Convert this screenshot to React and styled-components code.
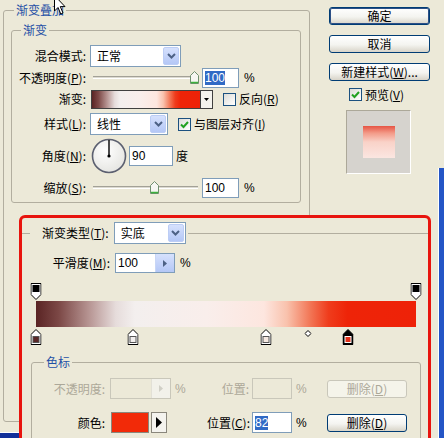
import React from 'react';
import styled, { createGlobalStyle } from 'styled-components';

const GRADIENT =
    'linear-gradient(to right, #5a2424 0%, #7c4846 6%, #b79593 14%, #e6dcdb 21%, #f3efee 26%, #f9eeeb 45%, #fde6df 60%, #f9c2ad 66%, #f27858 72%, #ef3c1c 77%, #ee2408 82%, #ee2208 100%)';

const bottomStops = [
    { pos: 0, color: '#5a2828' },
    { pos: 25.5, color: '#f2efee' },
    { pos: 60.5, color: '#f6e9e1' },
    { pos: 82, color: '#e3301a', selected: true },
];
const topStops = [{ pos: 0 }, { pos: 100 }];
const midpoint = 71.5;

const GlobalStyle = createGlobalStyle`
    html, body {
        margin: 0;
        padding: 0;
        background: #ece9d8;
    }
    body {
        font-family: "Noto Sans CJK SC", "Liberation Sans", sans-serif;
        font-size: 12px;
        color: #000;
    }
    u { text-underline-offset: 1px; }
`;

const Screen = styled.div`
    position: relative;
    width: 444px;
    height: 438px;
    overflow: hidden;
    background: #ece9d8;
`;

const Dialog = styled.div`
    display: flex;
    align-items: flex-start;
`;

const Group = styled.fieldset`
    box-sizing: border-box;
    min-width: 0;
    margin: ${(p) => p.$m || 0};
    padding: ${(p) => p.$pad || 0};
    width: ${(p) => (p.$w ? p.$w + 'px' : 'auto')};
    height: ${(p) => (p.$h ? p.$h + 'px' : 'auto')};
    border: 1px solid #b2ae9f;
    border-radius: 3px;
`;

const TopLineGroup = styled.fieldset`
    box-sizing: border-box;
    min-width: 0;
    margin: 4px 0 0 0;
    padding: 9px 0 0 0;
    border: none;
    border-top: 1px solid #b2ae9f;
`;

const Legend = styled.legend`
    margin-left: ${(p) => p.$ml}px;
    padding: 0 2px;
    color: #1f50a6;
    line-height: 14px;
`;

const TypeLegend = styled.legend`
    margin-left: 8px;
    padding: 0 2px 0 12px;
`;

const LegendInner = styled.div`
    display: flex;
    align-items: center;
    gap: 5px;
    line-height: 14px;
`;

const Form = styled.div`
    display: flex;
    flex-direction: column;
    padding-top: 8px;
`;

const Row = styled.div`
    display: flex;
    align-items: center;
    height: ${(p) => p.$h}px;
`;

const Label = styled.div`
    flex-shrink: 0;
    width: ${(p) => p.$w}px;
    margin-right: ${(p) => p.$gap ?? 4}px;
    text-align: right;
    white-space: nowrap;
    line-height: 14px;
    color: ${(p) => (p.$disabled ? '#aca899' : '#000')};
`;

const Text = styled.span`
    margin-left: ${(p) => p.$ml || 0}px;
    line-height: 14px;
    white-space: nowrap;
    font-family: ${(p) => (p.$latin ? '"Liberation Sans", "Noto Sans CJK SC", sans-serif' : 'inherit')};
    color: ${(p) => (p.$disabled ? '#aca899' : '#000')};
`;

const Combo = styled.div`
    box-sizing: border-box;
    width: ${(p) => p.$w}px;
    height: 22px;
    border: 1px solid #7f9db9;
    background: #fff;
    display: flex;
    align-items: center;
    justify-content: space-between;
    padding: 0 1px 0 6px;
`;

const ComboButton = styled.span`
    box-sizing: border-box;
    width: 16px;
    height: 18px;
    border: 1px solid #bccdf5;
    border-radius: 2px;
    background: linear-gradient(#d6e1fd, #b4c7f6);
    display: flex;
    align-items: center;
    justify-content: center;
`;

const Field = styled.div`
    box-sizing: border-box;
    flex-shrink: 0;
    width: ${(p) => p.$w}px;
    height: ${(p) => p.$h || 20}px;
    margin-left: ${(p) => p.$ml || 0}px;
    border: 1px solid ${(p) => (p.$disabled ? '#c9c7ba' : '#7f9db9')};
    background: ${(p) => (p.$disabled ? '#ece9d8' : '#fff')};
    display: flex;
    align-items: center;
    justify-content: space-between;
    padding-left: 2px;
    font-family: "Liberation Sans", "Noto Sans CJK SC", sans-serif;
    font-size: 12px;
    line-height: 14px;
`;

const Selected = styled.span`
    background: #316ac5;
    color: #fff;
`;

const SpinButton = styled.span`
    box-sizing: border-box;
    width: 19px;
    height: 100%;
    display: flex;
    align-items: center;
    justify-content: center;
    background: ${(p) => (p.$disabled ? '#f2f1ea' : 'linear-gradient(#d6e1fd, #b4c7f6)')};
    border-left: 1px solid ${(p) => (p.$disabled ? '#e2e0d6' : '#c8d6f6')};
`;

const Slider = styled.div`
    position: relative;
    flex-shrink: 0;
    width: ${(p) => p.$w}px;
    height: 16px;
`;

const Track = styled.div`
    margin: 6px 2px 0 3px;
    height: 1px;
    border-top: 1px solid #a3a197;
    border-bottom: 1px solid #fff;
    background: #dcdad0;
`;

const Thumb = styled.svg`
    position: absolute;
    top: 1px;
`;

const Swatch = styled.div`
    box-sizing: border-box;
    width: 110px;
    height: 19px;
    margin-left: 1px;
    border: 1px solid #404040;
    background: ${GRADIENT};
`;

const SwatchArrow = styled.div`
    box-sizing: border-box;
    width: 12px;
    height: 19px;
    border: 1px solid #404040;
    border-left: none;
    background: #f4f3ee;
    display: flex;
    align-items: center;
    justify-content: center;
`;

const CheckBox = styled.span`
    box-sizing: border-box;
    flex-shrink: 0;
    width: 13px;
    height: 13px;
    margin-left: ${(p) => p.$ml || 0}px;
    margin-right: 3px;
    border: 1px solid #1c5180;
    background: linear-gradient(135deg, #dcdcd7, #ffffff);
    display: inline-flex;
    align-items: center;
    justify-content: center;
`;

const Dial = styled.svg`
    flex-shrink: 0;
    margin-left: 1px;
`;

const Side = styled.div`
    display: flex;
    flex-direction: column;
    width: 101px;
    margin: 7px 0 0 19px;
`;

const Button = styled.div`
    box-sizing: border-box;
    flex-shrink: 0;
    width: ${(p) => p.$w || 101}px;
    height: 18px;
    margin-top: ${(p) => p.$mt || 0}px;
    border: 1px solid ${(p) => (p.$disabled ? '#c9c7ba' : '#003c74')};
    border-radius: 3px;
    background: ${(p) =>
        p.$disabled ? '#f5f4ea' : 'linear-gradient(#ffffff, #f4f4f0 55%, #d8d4c8)'};
    box-shadow: ${(p) => (p.$default ? 'inset 0 0 0 1px #2c4f86' : 'none')};
    color: ${(p) => (p.$disabled ? '#aca899' : '#000')};
    display: flex;
    align-items: center;
    justify-content: center;
    line-height: 14px;
    white-space: nowrap;
`;

const CheckRow = styled.div`
    display: flex;
    align-items: center;
    margin: 7px 0 0 20px;
    height: 13px;
    line-height: 14px;
`;

const Preview = styled.div`
    box-sizing: border-box;
    width: 65px;
    height: 64px;
    margin: 9px 0 0 17px;
    border: 1px solid #fff;
    border-top-color: #aca899;
    border-left-color: #aca899;
    background: #d6d3ce;
    display: flex;
    align-items: center;
    justify-content: center;
`;

const PreviewSwatch = styled.div`
    width: 32px;
    height: 32px;
    background: linear-gradient(#e65444 0%, #f39a88 22%, #f9d2c8 50%, #fbe6e1 100%);
`;

const Overlay = styled.div`
    position: absolute;
    left: 19px;
    top: 215px;
    width: 412px;
    height: 240px;
    box-sizing: border-box;
    border: 3px solid #e8140e;
    border-radius: 6px;
    background: #ece9d8;
`;

const StopTrack = styled.div`
    position: relative;
    width: 380px;
    height: 45px;
    margin: 10px 0 0 14px;
    padding-top: 18px;
`;

const Bar = styled.div`
    height: 26px;
    background: ${GRADIENT};
`;

const StopIcon = styled.svg`
    position: absolute;
    top: ${(p) => p.$top}px;
    transform: translateX(-50%);
`;

const StopGrid = styled.div`
    display: grid;
    grid-template-columns: 78px 61px 18px 63px 40px 35px 80px;
    grid-template-rows: 21px 21px;
    row-gap: 13px;
    column-gap: 0;
    align-items: center;
    padding-top: 9px;
`;

const GridLabel = styled.div`
    text-align: right;
    white-space: nowrap;
    line-height: 14px;
    padding-right: ${(p) => p.$pr || 0}px;
    color: ${(p) => (p.$disabled ? '#aca899' : '#000')};
`;

const GridCell = styled.div`
    display: flex;
    align-items: center;
    padding-left: ${(p) => p.$pl || 0}px;
`;

const ColorChip = styled.div`
    box-sizing: border-box;
    width: 38px;
    height: 21px;
    margin-left: 1px;
    border: 1px solid #8a877c;
    background: #f22a08;
`;

const ChipArrow = styled.div`
    box-sizing: border-box;
    width: 16px;
    height: 21px;
    margin-left: 2px;
    border: 1px solid #8a877c;
    background: #f4f3ee;
    display: flex;
    align-items: center;
    justify-content: center;
`;

const Cursor = styled.svg`
    position: absolute;
    left: 54px;
    top: -5px;
`;

const EdgeRight = styled.div`
    position: absolute;
    left: 438px;
    top: 168px;
    width: 6px;
    bottom: 0;
    background: #2455c6;
    border-left: 1px solid #fff;
`;

const EdgeBottom = styled.div`
    position: absolute;
    left: 0;
    top: 432px;
    width: 19px;
    height: 6px;
    background: #12309a;
    border-top: 1px solid #fff;
`;

function Chevron() {
    return (
        <svg width="9" height="6" viewBox="0 0 9 6">
            <polyline points="1,1 4.5,4.5 8,1" fill="none" stroke="#4d6185" strokeWidth="2" />
        </svg>
    );
}

function Check() {
    return (
        <svg width="11" height="11" viewBox="0 0 11 11">
            <path d="M2 5.5 L4.5 8 L9 3" fill="none" stroke="#21a121" strokeWidth="2" />
        </svg>
    );
}

function SliderThumb({ left }) {
    return (
        <Thumb width="9" height="13" viewBox="0 0 9 13" style={{ left }}>
            <path d="M0.5 4.5 L4.5 0.5 L8.5 4.5 V12.5 H0.5 Z" fill="#f6f6f2" stroke="#6f8f6f" />
            <line x1="1" y1="11.5" x2="8" y2="11.5" stroke="#3cb03c" strokeWidth="1.5" />
        </Thumb>
    );
}

function AngleDial() {
    return (
        <Dial width="36" height="36" viewBox="0 0 36 36">
            <defs>
                <radialGradient id="dialFill" cx="40%" cy="35%" r="70%">
                    <stop offset="0%" stopColor="#ffffff" />
                    <stop offset="100%" stopColor="#e4e4e0" />
                </radialGradient>
            </defs>
            <circle cx="18" cy="18" r="16.5" fill="url(#dialFill)" stroke="#5c6070" strokeWidth="1.6" />
            <line x1="18" y1="18" x2="18" y2="2" stroke="#000" strokeWidth="1.4" />
            <circle cx="18" cy="18" r="1.6" fill="#000" />
        </Dial>
    );
}

function ColorStop({ stop }) {
    return (
        <StopIcon $top={46} width="11" height="16" viewBox="0 0 11 16" style={{ left: `${stop.pos}%` }}>
            <path
                d="M5.5 0.5 L10.5 5.5 V15.5 H0.5 V5.5 Z"
                fill={stop.selected ? '#000' : '#fff'}
                stroke="#000"
            />
            <rect x="2.5" y="7.5" width="6" height="6" fill={stop.color} stroke={stop.selected ? '#fff' : '#555'} />
        </StopIcon>
    );
}

function OpacityStop({ stop }) {
    return (
        <StopIcon $top={0} width="11" height="17" viewBox="0 0 11 17" style={{ left: `${stop.pos}%` }}>
            <path d="M0.5 0.5 H10.5 V11.5 L5.5 16.5 L0.5 11.5 Z" fill="#fff" stroke="#000" />
            <rect x="2" y="2" width="7" height="7" fill="#000" />
        </StopIcon>
    );
}

function App() {
    return (
        <Screen>
            <GlobalStyle />
            <Dialog>
                <Group $m="3px 0 0 3px" $w={307} $h={419}>
                    <Legend $ml={10}>渐变叠加</Legend>
                    <Group $m="6px 0 0 7px" $w={290}>
                        <Legend $ml={9}>渐变</Legend>
                        <Form>
                            <Row $h={22}>
                                <Label $w={74}>混合模式:</Label>
                                <Combo $w={91}>
                                    <Text>正常</Text>
                                    <ComboButton><Chevron /></ComboButton>
                                </Combo>
                            </Row>
                            <Row $h={21}>
                                <Label $w={74}>不透明度(<u>P</u>):</Label>
                                <Slider $w={110}>
                                    <Track />
                                    <SliderThumb left={100} />
                                </Slider>
                                <Field $w={37} $ml={2}>
                                    <Selected>100</Selected>
                                </Field>
                                <Text $ml={5} $latin>%</Text>
                            </Row>
                            <Row $h={22}>
                                <Label $w={74}>渐变:</Label>
                                <Swatch />
                                <SwatchArrow>
                                    <svg width="5" height="3" viewBox="0 0 5 3">
                                        <path d="M0 0 H5 L2.5 3 Z" fill="#000" />
                                    </svg>
                                </SwatchArrow>
                                <CheckBox $ml={10} />
                                <Text>反向(<u>R</u>)</Text>
                            </Row>
                            <Row $h={28}>
                                <Label $w={74}>样式(<u>L</u>):</Label>
                                <Combo $w={78}>
                                    <Text>线性</Text>
                                    <ComboButton><Chevron /></ComboButton>
                                </Combo>
                                <CheckBox $ml={10}><Check /></CheckBox>
                                <Text>与图层对齐(<u>I</u>)</Text>
                            </Row>
                            <Row $h={36}>
                                <Label $w={74}>角度(<u>N</u>):</Label>
                                <AngleDial />
                                <Field $w={44} $ml={2}>90</Field>
                                <Text $ml={3}>度</Text>
                            </Row>
                            <Row $h={28}>
                                <Label $w={74}>缩放(<u>S</u>):</Label>
                                <Slider $w={110}>
                                    <Track />
                                    <SliderThumb left={60} />
                                </Slider>
                                <Field $w={37} $ml={2}>100</Field>
                                <Text $ml={5} $latin>%</Text>
                            </Row>
                        </Form>
                    </Group>
                </Group>

                <Side>
                    <Button $default>确定</Button>
                    <Button $mt={10}>取消</Button>
                    <Button $mt={10}>新建样式(<u>W</u>)...</Button>
                    <CheckRow>
                        <CheckBox><Check /></CheckBox>
                        <span>预览(<u>V</u>)</span>
                    </CheckRow>
                    <Preview>
                        <PreviewSwatch />
                    </Preview>
                </Side>
            </Dialog>

            <Overlay>
                <TopLineGroup>
                    <TypeLegend>
                        <LegendInner>
                            <span>渐变类型(<u>T</u>):</span>
                            <Combo $w={72}>
                                <Text>实底</Text>
                                <ComboButton><Chevron /></ComboButton>
                            </Combo>
                        </LegendInner>
                    </TypeLegend>
                    <Row $h={20}>
                        <Label $w={88} $gap={5}>平滑度(<u>M</u>):</Label>
                        <Field $w={60}>
                            <span>100</span>
                            <SpinButton>
                                <svg width="4" height="7" viewBox="0 0 4 7">
                                    <path d="M0 0 L4 3.5 L0 7 Z" fill="#4d6185" />
                                </svg>
                            </SpinButton>
                        </Field>
                        <Text $ml={5} $latin>%</Text>
                    </Row>

                    <StopTrack>
                        {topStops.map((s, i) => (
                            <OpacityStop stop={s} key={i} />
                        ))}
                        <Bar />
                        {bottomStops.map((s, i) => (
                            <ColorStop stop={s} key={i} />
                        ))}
                        <StopIcon $top={47} width="7" height="7" viewBox="0 0 7 7" style={{ left: `${midpoint}%` }}>
                            <path d="M3.5 0.5 L6.5 3.5 L3.5 6.5 L0.5 3.5 Z" fill="#fff" stroke="#000" />
                        </StopIcon>
                    </StopTrack>

                    <Group $m="9px 0 0 9px" $w={390} $h={120}>
                        <Legend $ml={12}>色标</Legend>
                        <StopGrid>
                            <GridLabel $disabled $pr={5}>不透明度:</GridLabel>
                            <GridCell>
                                <Field $w={61} $h={21} $disabled>
                                    <span />
                                    <SpinButton $disabled>
                                        <svg width="4" height="7" viewBox="0 0 4 7">
                                            <path d="M0 0 L4 3.5 L0 7 Z" fill="#d0cfc6" />
                                        </svg>
                                    </SpinButton>
                                </Field>
                            </GridCell>
                            <GridCell $pl={4}><Text $latin $disabled>%</Text></GridCell>
                            <GridLabel $disabled $pr={3}>位置:</GridLabel>
                            <GridCell><Field $w={40} $h={21} $disabled /></GridCell>
                            <GridCell $pl={4}><Text $latin $disabled>%</Text></GridCell>
                            <GridCell><Button $w={80} $disabled>删除(<u>D</u>)</Button></GridCell>

                            <GridLabel $pr={5}>颜色:</GridLabel>
                            <GridCell>
                                <ColorChip />
                                <ChipArrow>
                                    <svg width="6" height="11" viewBox="0 0 6 11">
                                        <path d="M0 0 L6 5.5 L0 11 Z" fill="#000" />
                                    </svg>
                                </ChipArrow>
                            </GridCell>
                            <GridCell />
                            <GridLabel $pr={2}>位置(<u>C</u>):</GridLabel>
                            <GridCell>
                                <Field $w={40} $h={21}>
                                    <Selected>82</Selected>
                                </Field>
                            </GridCell>
                            <GridCell $pl={4}><Text $latin>%</Text></GridCell>
                            <GridCell><Button $w={80}>删除(<u>D</u>)</Button></GridCell>
                        </StopGrid>
                    </Group>
                </TopLineGroup>
            </Overlay>

            <Cursor width="13" height="21" viewBox="0 0 13 21">
                <path d="M0.5 0.5 L0.5 16 L4 12.5 L6.8 19 L9 18 L6.3 11.6 L11 11.6 Z" fill="#fff" stroke="#000" />
            </Cursor>
            <EdgeRight />
            <EdgeBottom />
        </Screen>
    );
}

export default App;
